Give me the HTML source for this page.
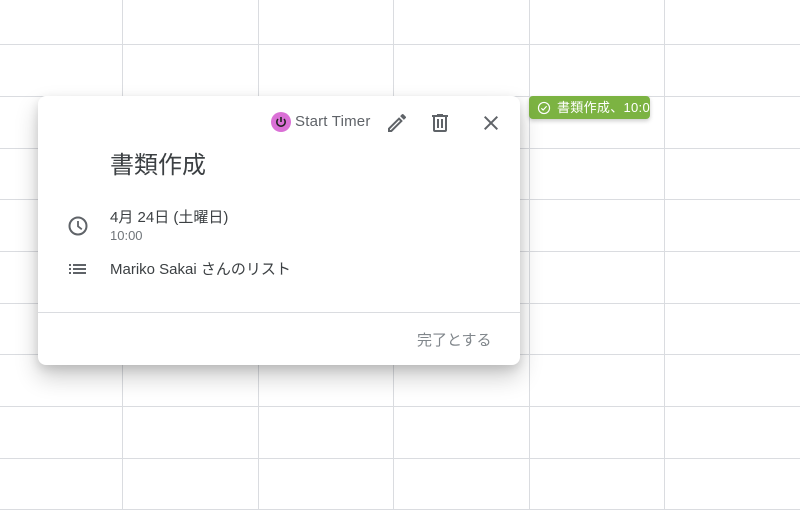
<!DOCTYPE html>
<html><head><meta charset="utf-8"><style>
body{margin:0;width:800px;height:510px;overflow:hidden;background:#fff;font-family:"Liberation Sans","Noto Sans CJK JP",sans-serif;position:relative}
.v{position:absolute;top:0;width:1px;height:510px;background:#dadce0}
.h{position:absolute;left:0;height:1px;width:800px;background:#dadce0}
.card{position:absolute;left:38px;top:96px;width:482px;height:269px;background:#fff;border-radius:8px;box-shadow:0 12px 24px rgba(0,0,0,.2),0 4px 10px rgba(0,0,0,.12)}
.t{position:absolute;white-space:nowrap;color:#3c4043}
</style></head><body>
<div class="v" style="left:122px"></div><div class="v" style="left:258px"></div><div class="v" style="left:393px"></div><div class="v" style="left:529px"></div><div class="v" style="left:664px"></div>
<div class="h" style="top:44px"></div><div class="h" style="top:96px"></div><div class="h" style="top:148px"></div><div class="h" style="top:199px"></div><div class="h" style="top:251px"></div><div class="h" style="top:303px"></div><div class="h" style="top:354px"></div><div class="h" style="top:406px"></div><div class="h" style="top:458px"></div><div class="h" style="top:509px"></div>
<div style="position:absolute;left:529px;top:96px;width:121px;height:23px;background:#7cb342;border-radius:4px;color:#fff;font-size:13px;line-height:23px;overflow:hidden;white-space:nowrap;box-shadow:0 2px 4px rgba(0,0,0,.2)">
<svg style="position:absolute;left:8px;top:5px" width="14" height="14" viewBox="0 0 24 24"><circle cx="12" cy="12" r="9.5" fill="none" stroke="#fff" stroke-width="2"/><path d="M7.5 12.5l3 3 6-6.5" fill="none" stroke="#fff" stroke-width="2"/></svg>
<span style="position:absolute;left:28px;letter-spacing:0.3px">書類作成、10:00</span></div>
<div class="card">
<svg style="position:absolute;left:233px;top:16px" width="20" height="20" viewBox="0 0 20 20"><circle cx="10" cy="10" r="10" fill="#da70d6"/><path d="M10 5v5" stroke="#222" stroke-width="1.6"/><path d="M7 7a4.2 4.2 0 1 0 6 0" fill="none" stroke="#222" stroke-width="1.6"/></svg>
<div class="t" style="left:257px;top:17px;font-size:15px;color:#5f6368;letter-spacing:0.2px">Start Timer</div>
<svg style="position:absolute;left:347px;top:15px" width="24" height="24" viewBox="0 0 24 24"><path d="M3 17.25V21h3.75L17.81 9.94l-3.75-3.75L3 17.25zM5.92 19H5v-.92l9.06-9.06.92.92L5.92 19zM20.71 5.63l-2.34-2.34a1 1 0 0 0-1.41 0l-1.83 1.83 3.75 3.75 1.83-1.83a1 1 0 0 0 0-1.41z" fill="#5f6368"/></svg>
<svg style="position:absolute;left:390px;top:15px" width="24" height="24" viewBox="0 0 24 24"><path d="M15 4V3H9v1H4v2h1v13a2 2 0 0 0 2 2h10a2 2 0 0 0 2-2V6h1V4h-5zm2 15H7V6h10v13zM9 8h2v9H9zm4 0h2v9h-2z" fill="#5f6368"/></svg>
<svg style="position:absolute;left:441px;top:15px" width="24" height="24" viewBox="0 0 24 24"><path d="M19 6.41L17.59 5 12 10.59 6.41 5 5 6.41 10.59 12 5 17.59 6.41 19 12 13.41 17.59 19 19 17.59 13.41 12z" fill="#5f6368"/></svg>
<div class="t" style="left:72px;top:49px;font-size:24px">書類作成</div>
<svg style="position:absolute;left:28px;top:118px" width="24" height="24" viewBox="0 0 24 24"><circle cx="12" cy="12" r="8.5" fill="none" stroke="#5f6368" stroke-width="2"/><path d="M12 7v5.3l3.8 3" fill="none" stroke="#5f6368" stroke-width="1.8"/></svg>
<div class="t" style="left:72px;top:110px;font-size:15px">4月 24日 (土曜日)</div>
<div class="t" style="left:72px;top:132px;font-size:13px;color:#70757a">10:00</div>
<svg style="position:absolute;left:30px;top:165px" width="20" height="16" viewBox="0 0 20 16"><g fill="#5f6368"><rect x="1" y="3" width="2" height="2"/><rect x="1" y="7" width="2" height="2"/><rect x="1" y="11" width="2" height="2"/><rect x="5" y="3" width="13" height="2"/><rect x="5" y="7" width="13" height="2"/><rect x="5" y="11" width="13" height="2"/></g></svg>
<div class="t" style="left:72px;top:162px;font-size:15px">Mariko Sakai さんのリスト</div>
<div style="position:absolute;left:0;right:0;top:216px;height:1px;background:#dadce0"></div>
<div class="t" style="left:379px;top:233px;font-size:15px;color:#80868b">完了とする</div>
</div>
</body></html>
